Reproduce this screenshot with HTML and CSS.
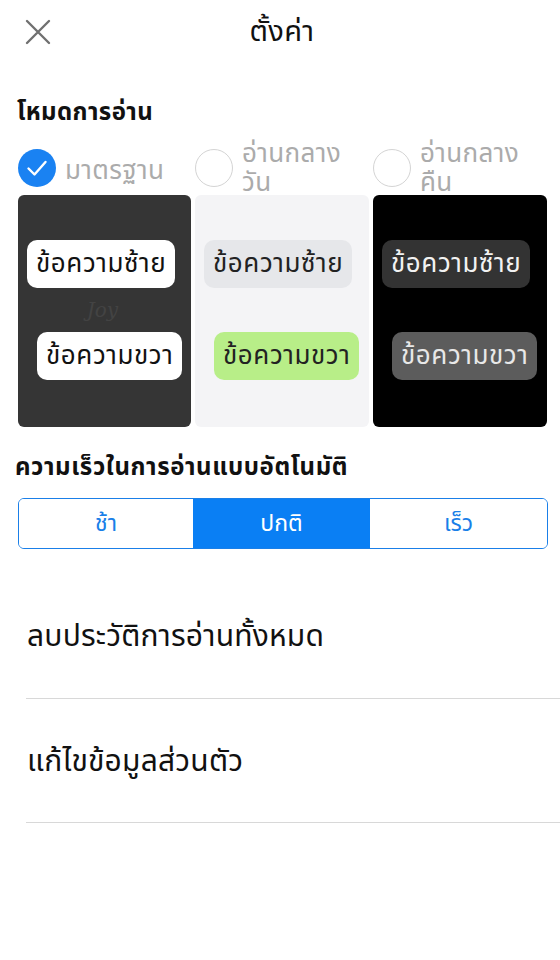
FILE: index.html
```html
<!DOCTYPE html>
<html lang="th">
<head>
<meta charset="utf-8">
<title>ตั้งค่า</title>
<link rel="stylesheet" href="styles.css">
</head>
<body>
<div class="page">
  <header class="topbar">
    <button class="close" aria-label="ปิด">
      <svg width="26" height="26" viewBox="0 0 26 26"><path d="M2 2 L24 24 M24 2 L2 24" stroke="#707070" stroke-width="2.4" stroke-linecap="round"/></svg>
    </button>
    <h1 class="title">ตั้งค่า</h1>
  </header>

  <h2 class="section-title">โหมดการอ่าน</h2>
  <div class="modes">
    <div class="mode">
      <div class="mode-head">
        <span class="radio checked">
          <svg width="38" height="38" viewBox="0 0 38 38"><circle cx="19" cy="19" r="19" fill="#1a82f2"/><path d="M10.5 19.5 L16.5 25.5 L27.5 13" fill="none" stroke="#fff" stroke-width="2.4" stroke-linecap="round" stroke-linejoin="round"/></svg>
        </span>
        <span class="mode-label">มาตรฐาน</span>
      </div>
      <div class="preview dark">
        <div class="bubble left">ข้อความซ้าย</div>
        <div class="watermark">Joy</div>
        <div class="bubble right">ข้อความขวา</div>
      </div>
    </div>
    <div class="mode">
      <div class="mode-head">
        <span class="radio"></span>
        <span class="mode-label">อ่านกลางวัน</span>
      </div>
      <div class="preview light">
        <div class="bubble left">ข้อความซ้าย</div>
        <div class="watermark"></div>
        <div class="bubble right">ข้อความขวา</div>
      </div>
    </div>
    <div class="mode">
      <div class="mode-head">
        <span class="radio"></span>
        <span class="mode-label">อ่านกลางคืน</span>
      </div>
      <div class="preview night">
        <div class="bubble left">ข้อความซ้าย</div>
        <div class="watermark"></div>
        <div class="bubble right">ข้อความขวา</div>
      </div>
    </div>
  </div>

  <h2 class="section-title speed-title">ความเร็วในการอ่านแบบอัตโนมัติ</h2>
  <div class="segmented">
    <button class="seg">ช้า</button>
    <button class="seg active">ปกติ</button>
    <button class="seg">เร็ว</button>
  </div>

  <ul class="list">
    <li class="item">ลบประวัติการอ่านทั้งหมด</li>
    <li class="item">แก้ไขข้อมูลส่วนตัว</li>
  </ul>
</div>
</body>
</html>
```
FILE: styles.css
```css
* { box-sizing: border-box; }
html, body { margin: 0; padding: 0; background: #fff; }
body {
  font-family: "Noto Sans Thai", "Noto Sans", "DejaVu Sans", sans-serif;
  color: #111;
  width: 560px;
}
.page { padding: 0; }

.topbar {
  position: relative;
  height: 64px;
  display: flex;
  align-items: center;
  justify-content: center;
}
.close {
  position: absolute;
  left: 25px;
  top: 19px;
  border: 0;
  background: none;
  padding: 0;
  width: 26px;
  height: 26px;
}
.title {
  margin: 0 0 0 4px;
  font-size: 29px;
  font-weight: 400;
  line-height: 1;
  letter-spacing: 0.3px;
}

.section-title {
  margin: 34px 0 0 17px;
  font-size: 24px;
  font-weight: 700;
  line-height: 30px;
  letter-spacing: 0.4px;
}

.modes {
  margin: 17px 12px 0 18px;
  display: grid;
  grid-template-columns: 173px 174px 174px;
  column-gap: 4px;
}
.mode-head {
  display: flex;
  align-items: flex-start;
  height: 50px;
  gap: 9px;
}
.radio {
  flex: none;
  width: 38px;
  height: 38px;
  border-radius: 50%;
  border: 1.5px solid #d4d4d4;
  margin-top: 4px;
}
.radio.checked { border: 0; }
.mode-label {
  font-size: 26px;
  line-height: 29px;
  letter-spacing: 0.4px;
  color: #ababab;
  width: 112px;
  margin-top: -5px;
}
.mode:first-child .mode-label { margin-top: 12px; }

.preview {
  height: 232px;
  border-radius: 6px;
  display: flex;
  flex-direction: column;
  padding-top: 45px;
}
.preview.dark { background: #353535; }
.preview.light { background: #f4f4f6; }
.preview.night { background: #000; }

.bubble {
  font-size: 26px;
  letter-spacing: 0.6px;
  line-height: 48px;
  height: 48px;
  border-radius: 10px;
  padding: 0 9px;
  white-space: nowrap;
  width: max-content;
}
.bubble.left { margin-left: 9px; }
.bubble.right { margin-left: 19px; }
.watermark {
  height: 44px;
  font-family: "DejaVu Serif", serif;
  font-style: italic;
  font-size: 20px;
  color: #434343;
  text-align: center;
  line-height: 44px;
  margin-right: 4px;
}
.dark .bubble { background: #fff; color: #111; }
.light .bubble.left { background: #e6e7ea; color: #222; }
.light .bubble.right { background: #b8ee88; color: #222; }
.night .bubble.left { background: #333; color: #f2f2f2; }
.night .bubble.right { background: #5c5c5c; color: #e8e8e8; }

.speed-title { margin-top: 26px; margin-left: 15px; letter-spacing: 0.6px; }

.segmented {
  margin: 15px 12px 0 18px;
  height: 51px;
  border: 1.5px solid #1a7fe8;
  border-radius: 6px;
  display: grid;
  grid-template-columns: 174px 177px 1fr;
  overflow: hidden;
}
.seg {
  border: 0;
  background: #fff;
  color: #1a7fe8;
  font-family: inherit;
  font-size: 23px;
  padding: 0;
}
.seg.active { background: #0a7ff4; color: #fff; }

.list {
  list-style: none;
  margin: 40px 0 0 26px;
  padding: 0;
}
.item {
  font-size: 30px;
  letter-spacing: 0.2px;
  height: 124px;
  line-height: 42px;
  padding-top: 42px;
  padding-left: 1px;
  border-bottom: 1.5px solid #d8d8d8;
}
.item:first-child { height: 110px; padding-top: 27px; }
```
